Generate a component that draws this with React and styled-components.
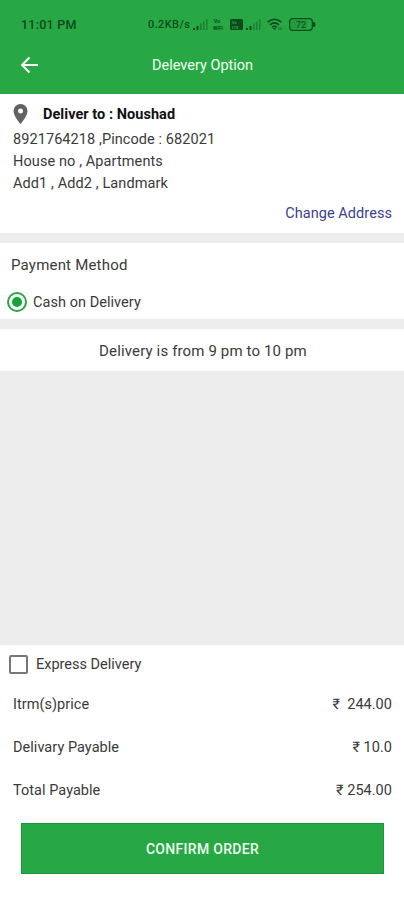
import React, { useState } from "react";
import styled, { createGlobalStyle } from "styled-components";

const Colors = {
  green: "#28a745",
  statusInk: "#0d4a1c",
  text: "#3a3a3a",
  link: "#3c3f8f",
  gap: "#ededed",
};

const GlobalStyle = createGlobalStyle`
  * {
    box-sizing: border-box;
  }

  body {
    margin: 0;
    background-color: white;
    font-family: Roboto, "Liberation Sans", sans-serif;
    color: ${Colors.text};
  }
`;

const Screen = styled.div`
  display: flex;
  flex-direction: column;
  width: 404px;
  height: 900px;
  background-color: ${Colors.gap};
`;

const Header = styled.header`
  height: 94px;
  background-color: ${Colors.green};
`;

const StatusBar = styled.div`
  display: flex;
  align-items: center;
  height: 49px;
  padding-left: 21px;
  color: ${Colors.statusInk};
`;

const Clock = styled.span`
  width: 127px;
  font-size: 12.5px;
  font-weight: 500;
  letter-spacing: 0.25px;
`;

const NetSpeed = styled.span`
  width: 45px;
  font-size: 11px;
  font-weight: 500;
  letter-spacing: 0.4px;
  white-space: nowrap;
`;

const StatusIcon = styled.svg`
  flex: none;
  margin-left: ${(props) => props.$gap || 0}px;
`;

const AppBar = styled.div`
  display: flex;
  align-items: center;
  height: 32px;
  padding-left: 20px;
`;

const BackButton = styled.button`
  display: flex;
  width: 132px;
  padding: 0;
  border: 0;
  background: none;
`;

const Title = styled.h1`
  margin: 0;
  padding-top: 1px;
  color: #f1fff2;
  font-size: 14.5px;
  font-weight: 400;
`;

const Address = styled.section`
  height: 139px;
  padding: 8px 12px 0 13px;
  background-color: white;
`;

const DeliverTo = styled.div`
  display: flex;
  align-items: center;
  height: 25px;
  margin-bottom: 2px;
  color: #111;
  font-size: 14.5px;
  font-weight: 700;
  letter-spacing: 0.05px;
`;

const PinIcon = styled.svg`
  margin: 0 15px 2px 0;
`;

const AddressLine = styled.div`
  font-size: 14.5px;
  line-height: 22px;
  letter-spacing: ${(props) => props.$tracking || 0}px;
`;

const ChangeAddress = styled.button`
  display: block;
  margin: 9px 0 0 auto;
  padding: 0;
  border: 0;
  background: none;
  color: ${Colors.link};
  font-family: inherit;
  font-size: 14.5px;
  line-height: 20px;
  letter-spacing: 0.06px;
`;

const Payment = styled.section`
  height: 76px;
  margin-top: 10px;
  padding: 12px 7px 0;
  background-color: white;
`;

const PaymentTitle = styled.h2`
  margin: 0;
  padding-left: 4px;
  font-size: 15px;
  font-weight: 400;
  line-height: 21px;
  letter-spacing: 0.2px;
`;

const Option = styled.label`
  display: flex;
  align-items: center;
  gap: 6px;
  height: 22px;
  margin-top: 15px;
  font-size: 14.5px;
  letter-spacing: 0.05px;
  line-height: 19px;
`;

const Radio = styled.span`
  display: flex;
  align-items: center;
  justify-content: center;
  width: 20px;
  height: 20px;
  border: 2px solid ${Colors.green};
  border-radius: 50%;

  &::after {
    content: "";
    width: 10px;
    height: 10px;
    border-radius: 50%;
    background-color: #16a337;
  }
`;

const Slot = styled.section`
  height: 42px;
  margin-top: 10px;
  padding-left: 2px;
  background-color: white;
  font-size: 15px;
  line-height: 44px;
  letter-spacing: 0.14px;
  text-align: center;
`;

const Summary = styled.section`
  height: 255px;
  margin-top: auto;
  padding: 9px 12px 0 13px;
  background-color: white;
`;

const ExpressOption = styled.label`
  display: flex;
  align-items: center;
  gap: 7px;
  height: 21px;
  margin: 0 0 8px -4px;
  font-size: 14.5px;
  line-height: 21px;
`;

const Checkbox = styled.span`
  width: 19px;
  height: 19px;
  margin-right: 1px;
  border: 2px solid #777;
  border-radius: 2px;
`;

const PriceRow = styled.div`
  display: flex;
  align-items: center;
  justify-content: space-between;
  height: 43px;
  font-size: 14.5px;
  letter-spacing: 0.04px;
  white-space: pre;
`;

const ConfirmButton = styled.button`
  display: block;
  width: 363px;
  height: 51px;
  margin: 11px 0 0 8px;
  padding: 0;
  border: 1px solid #14993a;
  background-color: ${Colors.green};
  color: #eefff0;
  font-family: inherit;
  font-size: 14px;
  font-weight: 500;
  letter-spacing: 0.3px;
`;

const prices = [
  { label: "Itrm(s)price", amount: "₹  244.00" },
  { label: "Delivary Payable", amount: "₹ 10.0" },
  { label: "Total Payable", amount: "₹ 254.00" },
];

const Signal = ({ gap }) => (
  <StatusIcon $gap={gap} width="15" height="11" viewBox="0 0 15 11" fill="currentColor">
    <path d="M0 9h2v2H0zM3.5 7h2v4h-2z" />
    <path d="M7 4.5h1.8V11H7zM10 2.5h1.6V11H10zM13 0h1.6v11H13z" opacity="0.4" />
  </StatusIcon>
);

const StatusIcons = () => (
  <>
    <Signal />
    <StatusIcon $gap={5} width="14" height="13" viewBox="0 0 14 13" fill="currentColor">
      <text x="1" y="4.6" fontSize="5" fontWeight="700">Vo</text>
      <text x="0" y="11.6" fontSize="5" fontWeight="700">WiFi</text>
    </StatusIcon>
    <StatusIcon $gap={3} width="13" height="11" viewBox="0 0 13 11">
      <rect width="13" height="11" rx="1.5" fill={Colors.statusInk} />
      <g fill={Colors.green} fontSize="4" fontWeight="700">
        <text x="2" y="4.6">Vo</text>
        <text x="2" y="9.8">LTE</text>
      </g>
    </StatusIcon>
    <Signal gap={3} />
    <StatusIcon
      $gap={6}
      width="16"
      height="13"
      viewBox="0 0 16 13"
      fill="none"
      stroke="currentColor"
      strokeWidth="1.6"
    >
      <path d="M.7 4.2Q7.5-1.7 14.3 4.2M3 6.8q4.5-3.8 9 0M5.2 9.2q2.3-1.9 4.6 0" />
      <path d="M6.3 10.2h2.4l-1.2 1.5zM12 9.5V12M14 9.5V12" fill="currentColor" strokeWidth=".7" />
    </StatusIcon>
    <StatusIcon $gap={6} width="27" height="13" viewBox="0 0 27 13">
      <rect x=".7" y=".7" width="22.6" height="11.6" rx="3" fill="none" stroke="currentColor" strokeWidth="1.3" />
      <path d="M24 4h1.2q1.2 0 1.2 2.5T25.2 9H24z" fill="currentColor" />
      <rect x="2.5" y="2.5" width="16" height="8" rx="1" fill="currentColor" opacity=".15" />
      <text x="12" y="9.6" fontSize="9" textAnchor="middle" fill="currentColor">72</text>
    </StatusIcon>
  </>
);

const App = () => {
  const [express, setExpress] = useState(false);

  return (
    <>
      <GlobalStyle />
      <Screen>
        <Header>
          <StatusBar>
            <Clock>11:01 PM</Clock>
            <NetSpeed>0.2KB/s</NetSpeed>
            <StatusIcons />
          </StatusBar>
          <AppBar>
            <BackButton aria-label="Back">
              <svg width="19" height="18" viewBox="0 0 19 18" fill="none" stroke="white" strokeWidth="2">
                <path d="M18 9H2.5M9.5 1.5L2 9l7.5 7.5" />
              </svg>
            </BackButton>
            <Title>Delevery Option</Title>
          </AppBar>
        </Header>

        <Address>
          <DeliverTo>
            <PinIcon width="15" height="20" viewBox="0 0 14 20" fill="#626262">
              <path
                fillRule="evenodd"
                d="M7 0a7 7 0 0 0-7 7c0 5.2 7 13 7 13s7-7.8 7-13a7 7 0 0 0-7-7zm0 4.5a2.5 2.5 0 1 1 0 5 2.5 2.5 0 0 1 0-5z"
              />
            </PinIcon>
            Deliver to : Noushad
          </DeliverTo>
          <AddressLine $tracking={0.08}>8921764218 ,Pincode : 682021</AddressLine>
          <AddressLine $tracking={0.1}>House no , Apartments</AddressLine>
          <AddressLine $tracking={0.1}>Add1 , Add2 , Landmark</AddressLine>
          <ChangeAddress>Change Address</ChangeAddress>
        </Address>

        <Payment>
          <PaymentTitle>Payment Method</PaymentTitle>
          <Option>
            <Radio />
            Cash on Delivery
          </Option>
        </Payment>

        <Slot>Delivery is from 9 pm to 10 pm</Slot>

        <Summary>
          <ExpressOption onClick={() => setExpress(!express)}>
            <Checkbox role="checkbox" aria-checked={express} />
            Express Delivery
          </ExpressOption>
          {prices.map((price) => (
            <PriceRow key={price.label}>
              <span>{price.label}</span>
              <span>{price.amount}</span>
            </PriceRow>
          ))}
          <ConfirmButton>CONFIRM ORDER</ConfirmButton>
        </Summary>
      </Screen>
    </>
  );
};

export default App;
